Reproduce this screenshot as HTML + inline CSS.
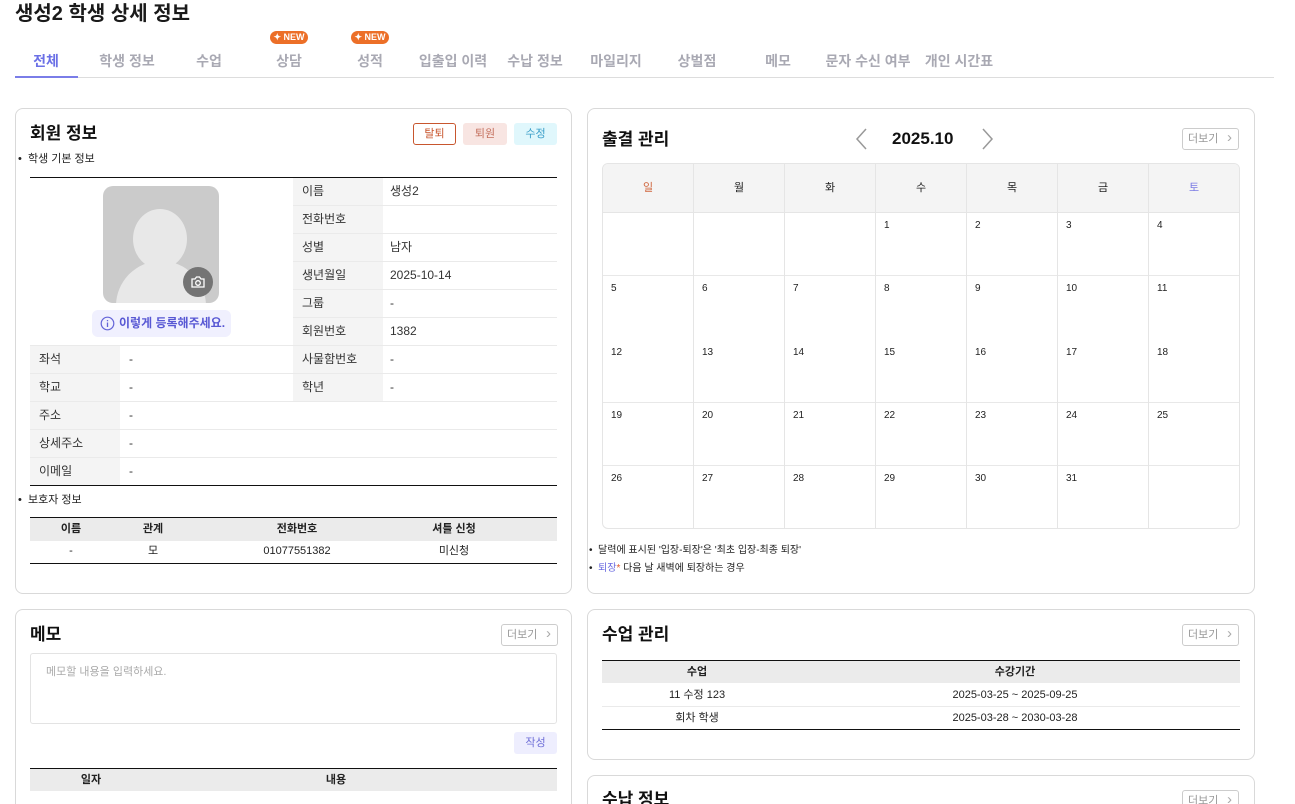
<!DOCTYPE html>
<html><head><meta charset="utf-8">
<style>
*{box-sizing:border-box;margin:0;padding:0}
html{width:1295px;height:804px;overflow:hidden}
body{width:1295px;height:804px;overflow:hidden;background:#fff;font-family:"Liberation Sans","Noto Sans CJK KR",sans-serif;color:#222;position:relative}
.a{position:absolute}
.t{position:absolute;white-space:nowrap;line-height:1}
.card{position:absolute;border:1px solid #d9d9d9;border-radius:8px;background:#fff}
.h{font-size:17px;font-weight:bold;color:#111}
.tab{position:absolute;top:51px;font-size:14px;color:#a9a9b3;font-weight:bold;transform:translateX(-50%);white-space:nowrap}
.new{position:absolute;top:31px;width:38px;height:13px;border-radius:7px;background:#ec6f28;color:#fff;font-size:9px;font-weight:bold;text-align:center;line-height:13px;transform:translateX(-50%)}
.more{position:absolute;width:57px;height:22px;border:1px solid #ccc;border-radius:3px;font-size:11px;color:#999;line-height:20px;padding-left:5px}
.more:after{content:"›";position:absolute;right:6px;top:-1px;font-size:15px;color:#aaa}
.lbl{position:absolute;background:#f4f4f4;font-size:12px;color:#333;padding-left:9px;height:27px;line-height:27px}
.val{position:absolute;font-size:12px;color:#333;padding-left:9px;height:27px;line-height:27px}
.hl{position:absolute;height:1px;background:#eaeaea}
.bl{position:absolute;height:1px;background:#111}
.c{position:absolute;font-size:11px;text-align:center;transform:translateX(-50%);white-space:nowrap;height:14px;line-height:14px}
.d{position:absolute;font-size:10px;color:#222}
</style></head><body>
<div class="t" style="left:15px;top:4px;font-size:20px;font-weight:bold;color:#1a1a1a">생성2 학생 상세 정보</div>
<div class="tab" style="left:46px;color:#6b70e6">전체</div>
<div class="tab" style="left:127px">학생 정보</div>
<div class="tab" style="left:209px">수업</div>
<div class="tab" style="left:289px">상담</div>
<div class="tab" style="left:370px">성적</div>
<div class="tab" style="left:453px">입출입 이력</div>
<div class="tab" style="left:535px">수납 정보</div>
<div class="tab" style="left:616px">마일리지</div>
<div class="tab" style="left:697px">상벌점</div>
<div class="tab" style="left:778px">메모</div>
<div class="tab" style="left:868px">문자 수신 여부</div>
<div class="tab" style="left:959px">개인 시간표</div>
<div class="new" style="left:289px">✦ NEW</div>
<div class="new" style="left:370px">✦ NEW</div>
<div class="a" style="left:15px;top:77px;width:1259px;height:1px;background:#ddd"></div>
<div class="a" style="left:15px;top:76px;width:63px;height:2px;background:#7a7de8"></div>

<!-- member card -->
<div class="card" style="left:15px;top:108px;width:557px;height:486px"></div>
<div class="t h" style="left:30px;top:125px">회원 정보</div>
<div class="a" style="left:413px;top:123px;width:43px;height:22px;border:1px solid #c8562e;border-radius:3px;font-size:11px;color:#c8562e;text-align:center;line-height:20px">탈퇴</div>
<div class="a" style="left:463px;top:123px;width:44px;height:22px;background:#f8e5e2;border-radius:3px;font-size:11px;color:#c4705e;text-align:center;line-height:22px">퇴원</div>
<div class="a" style="left:514px;top:123px;width:43px;height:22px;background:#e0f7fc;border-radius:3px;font-size:11px;color:#3b9fc9;text-align:center;line-height:22px">수정</div>
<div class="t" style="left:18px;top:154px;font-size:11px">•&nbsp;&nbsp;학생 기본 정보</div>
<div class="bl" style="left:30px;top:177px;width:527px"></div>
<div class="a" style="left:103px;top:186px;width:116px;height:117px;background:#cbcbcb;border-radius:10px;overflow:hidden">
 <div class="a" style="left:30px;top:23px;width:54px;height:60px;border-radius:50%;background:#e8e8e8"></div>
 <div class="a" style="left:13px;top:75px;width:90px;height:80px;border-radius:45px 45px 0 0;background:#e8e8e8"></div>
</div>
<div class="a" style="left:183px;top:267px;width:30px;height:30px;border-radius:50%;background:#747474"></div>
<svg class="a" style="left:190px;top:275px" width="16" height="14" viewBox="0 0 16 14"><path d="M2 4h3l1.5-2h3L11 4h3v8H2z" fill="none" stroke="#fff" stroke-width="1.3"/><circle cx="8" cy="8" r="2.3" fill="none" stroke="#fff" stroke-width="1.3"/></svg>
<div class="a" style="left:92px;top:310px;width:139px;height:27px;background:#f0f0fe;border-radius:6px"></div>
<svg class="a" style="left:100px;top:316px" width="15" height="15" viewBox="0 0 15 15"><circle cx="7.5" cy="7.5" r="6.3" fill="none" stroke="#6464d8" stroke-width="1.2"/><path d="M7.5 6.5v4.5M7.5 4v1.2" stroke="#6464d8" stroke-width="1.3"/></svg>
<div class="t" style="left:119px;top:317px;font-size:12px;color:#5858d4;font-weight:bold">이렇게 등록해주세요.</div>
<div class="lbl" style="left:293px;top:178px;width:90px;height:168px;padding:0"></div>
<div class="val" style="left:293px;top:178px">이름</div><div class="val" style="left:381px;top:178px">생성2</div>
<div class="val" style="left:293px;top:206px">전화번호</div>
<div class="val" style="left:293px;top:234px">성별</div><div class="val" style="left:381px;top:234px">남자</div>
<div class="val" style="left:293px;top:262px">생년월일</div><div class="val" style="left:381px;top:262px">2025-10-14</div>
<div class="val" style="left:293px;top:290px">그룹</div><div class="val" style="left:381px;top:290px">-</div>
<div class="val" style="left:293px;top:318px">회원번호</div><div class="val" style="left:381px;top:318px">1382</div>
<div class="hl" style="left:293px;top:205px;width:264px"></div>
<div class="hl" style="left:293px;top:233px;width:264px"></div>
<div class="hl" style="left:293px;top:261px;width:264px"></div>
<div class="hl" style="left:293px;top:289px;width:264px"></div>
<div class="hl" style="left:293px;top:317px;width:264px"></div>
<div class="hl" style="left:30px;top:345px;width:527px"></div>
<div class="lbl" style="left:30px;top:346px;width:90px">좌석</div><div class="val" style="left:120px;top:346px">-</div>
<div class="lbl" style="left:293px;top:346px;width:90px">사물함번호</div><div class="val" style="left:381px;top:346px">-</div>
<div class="hl" style="left:30px;top:373px;width:527px"></div>
<div class="lbl" style="left:30px;top:374px;width:90px">학교</div><div class="val" style="left:120px;top:374px">-</div>
<div class="lbl" style="left:293px;top:374px;width:90px">학년</div><div class="val" style="left:381px;top:374px">-</div>
<div class="hl" style="left:30px;top:401px;width:527px"></div>
<div class="lbl" style="left:30px;top:402px;width:90px">주소</div><div class="val" style="left:120px;top:402px">-</div>
<div class="hl" style="left:30px;top:429px;width:527px"></div>
<div class="lbl" style="left:30px;top:430px;width:90px">상세주소</div><div class="val" style="left:120px;top:430px">-</div>
<div class="hl" style="left:30px;top:457px;width:527px"></div>
<div class="lbl" style="left:30px;top:458px;width:90px">이메일</div><div class="val" style="left:120px;top:458px">-</div>
<div class="bl" style="left:30px;top:485px;width:527px"></div>
<div class="t" style="left:18px;top:495px;font-size:11px">•&nbsp;&nbsp;보호자 정보</div>
<div class="bl" style="left:30px;top:517px;width:527px"></div>
<div class="a" style="left:30px;top:518px;width:527px;height:23px;background:#ebebeb"></div>
<div class="c" style="left:71px;top:522px;font-weight:bold">이름</div>
<div class="c" style="left:153px;top:522px;font-weight:bold">관계</div>
<div class="c" style="left:297px;top:522px;font-weight:bold">전화번호</div>
<div class="c" style="left:454px;top:522px;font-weight:bold">셔틀 신청</div>
<div class="c" style="left:71px;top:544px">-</div>
<div class="c" style="left:153px;top:544px">모</div>
<div class="c" style="left:297px;top:544px">01077551382</div>
<div class="c" style="left:454px;top:544px">미신청</div>
<div class="bl" style="left:30px;top:563px;width:527px"></div>

<!-- memo card -->
<div class="card" style="left:15px;top:609px;width:557px;height:220px"></div>
<div class="t h" style="left:30px;top:626px">메모</div>
<div class="more" style="left:501px;top:624px">더보기</div>
<div class="a" style="left:30px;top:653px;width:527px;height:71px;border:1px solid #e3e3e3;border-radius:3px"></div>
<div class="t" style="left:46px;top:667px;font-size:11px;color:#aaa">메모할 내용을 입력하세요.</div>
<div class="a" style="left:514px;top:732px;width:43px;height:22px;background:#eeeefe;border-radius:3px;font-size:11px;color:#7070d8;text-align:center;line-height:22px">작성</div>
<div class="bl" style="left:30px;top:768px;width:527px"></div>
<div class="a" style="left:30px;top:769px;width:527px;height:22px;background:#ebebeb"></div>
<div class="c" style="left:91px;top:773px;font-weight:bold">일자</div>
<div class="c" style="left:336px;top:773px;font-weight:bold">내용</div>

<!-- attendance card -->
<div class="card" style="left:587px;top:108px;width:668px;height:486px"></div>
<div class="t h" style="left:602px;top:131px">출결 관리</div>
<svg class="a" style="left:853px;top:127px" width="16" height="24" viewBox="0 0 16 24"><path d="M13 2L4 12l9 10" fill="none" stroke="#999" stroke-width="1.5"/></svg>
<svg class="a" style="left:980px;top:127px" width="16" height="24" viewBox="0 0 16 24"><path d="M3 2l9 10-9 10" fill="none" stroke="#999" stroke-width="1.5"/></svg>
<div class="t" style="left:892px;top:130px;font-size:17px;font-weight:bold;color:#111">2025.10</div>
<div class="more" style="left:1182px;top:128px">더보기</div>
<div class="a" style="left:602px;top:163px;width:638px;height:366px;border:1px solid #e5e5e5;border-radius:6px;overflow:hidden">
 <div class="a" style="left:0;top:0;width:638px;height:49px;background:#f4f4f4;border-bottom:1px solid #e5e5e5"></div>
 <div class="a" style="left:0;top:111px;width:638px;height:1px;background:#e8e8e8"></div>
 <div class="a" style="left:0;top:238px;width:638px;height:1px;background:#e8e8e8"></div>
 <div class="a" style="left:0;top:301px;width:638px;height:1px;background:#e8e8e8"></div>
 <div class="a" style="left:90px;top:0;width:1px;height:366px;background:#e5e5e5"></div>
 <div class="a" style="left:181px;top:0;width:1px;height:366px;background:#e5e5e5"></div>
 <div class="a" style="left:272px;top:0;width:1px;height:366px;background:#e5e5e5"></div>
 <div class="a" style="left:363px;top:0;width:1px;height:366px;background:#e5e5e5"></div>
 <div class="a" style="left:454px;top:0;width:1px;height:366px;background:#e5e5e5"></div>
 <div class="a" style="left:545px;top:0;width:1px;height:366px;background:#e5e5e5"></div>
</div>
<div class="c" style="left:648px;top:181px;color:#d0663e">일</div>
<div class="c" style="left:739px;top:181px">월</div>
<div class="c" style="left:830px;top:181px">화</div>
<div class="c" style="left:921px;top:181px">수</div>
<div class="c" style="left:1012px;top:181px">목</div>
<div class="c" style="left:1103px;top:181px">금</div>
<div class="c" style="left:1194px;top:181px;color:#7b7be4">토</div>
<div class="d" style="left:884px;top:220px">1</div><div class="d" style="left:975px;top:220px">2</div><div class="d" style="left:1066px;top:220px">3</div><div class="d" style="left:1157px;top:220px">4</div>
<div class="d" style="left:611px;top:283px">5</div><div class="d" style="left:702px;top:283px">6</div><div class="d" style="left:793px;top:283px">7</div><div class="d" style="left:884px;top:283px">8</div><div class="d" style="left:975px;top:283px">9</div><div class="d" style="left:1066px;top:283px">10</div><div class="d" style="left:1157px;top:283px">11</div>
<div class="d" style="left:611px;top:347px">12</div><div class="d" style="left:702px;top:347px">13</div><div class="d" style="left:793px;top:347px">14</div><div class="d" style="left:884px;top:347px">15</div><div class="d" style="left:975px;top:347px">16</div><div class="d" style="left:1066px;top:347px">17</div><div class="d" style="left:1157px;top:347px">18</div>
<div class="d" style="left:611px;top:410px">19</div><div class="d" style="left:702px;top:410px">20</div><div class="d" style="left:793px;top:410px">21</div><div class="d" style="left:884px;top:410px">22</div><div class="d" style="left:975px;top:410px">23</div><div class="d" style="left:1066px;top:410px">24</div><div class="d" style="left:1157px;top:410px">25</div>
<div class="d" style="left:611px;top:473px">26</div><div class="d" style="left:702px;top:473px">27</div><div class="d" style="left:793px;top:473px">28</div><div class="d" style="left:884px;top:473px">29</div><div class="d" style="left:975px;top:473px">30</div><div class="d" style="left:1066px;top:473px">31</div>
<div class="t" style="left:589px;top:546px;font-size:10px">•&nbsp; 달력에 표시된 '입장-퇴장'은 '최초 입장-최종 퇴장'</div>
<div class="t" style="left:589px;top:564px;font-size:10px">•&nbsp; <span style="color:#6b6be0">퇴장</span><span style="color:#e05a2a">*</span> 다음 날 새벽에 퇴장하는 경우</div>

<!-- class card -->
<div class="card" style="left:587px;top:609px;width:668px;height:151px"></div>
<div class="t h" style="left:602px;top:626px">수업 관리</div>
<div class="more" style="left:1182px;top:624px">더보기</div>
<div class="bl" style="left:602px;top:660px;width:638px"></div>
<div class="a" style="left:602px;top:661px;width:638px;height:22px;background:#ebebeb"></div>
<div class="c" style="left:697px;top:665px;font-weight:bold">수업</div>
<div class="c" style="left:1015px;top:665px;font-weight:bold">수강기간</div>
<div class="c" style="left:697px;top:688px">11 수정 123</div>
<div class="c" style="left:1015px;top:688px">2025-03-25 ~ 2025-09-25</div>
<div class="hl" style="left:602px;top:706px;width:638px"></div>
<div class="c" style="left:697px;top:711px">회차 학생</div>
<div class="c" style="left:1015px;top:711px">2025-03-28 ~ 2030-03-28</div>
<div class="bl" style="left:602px;top:729px;width:638px"></div>

<div class="card" style="left:587px;top:775px;width:668px;height:100px"></div>
<div class="t h" style="left:602px;top:791px">수납 정보</div>
<div class="more" style="left:1182px;top:790px">더보기</div>
</body></html>
